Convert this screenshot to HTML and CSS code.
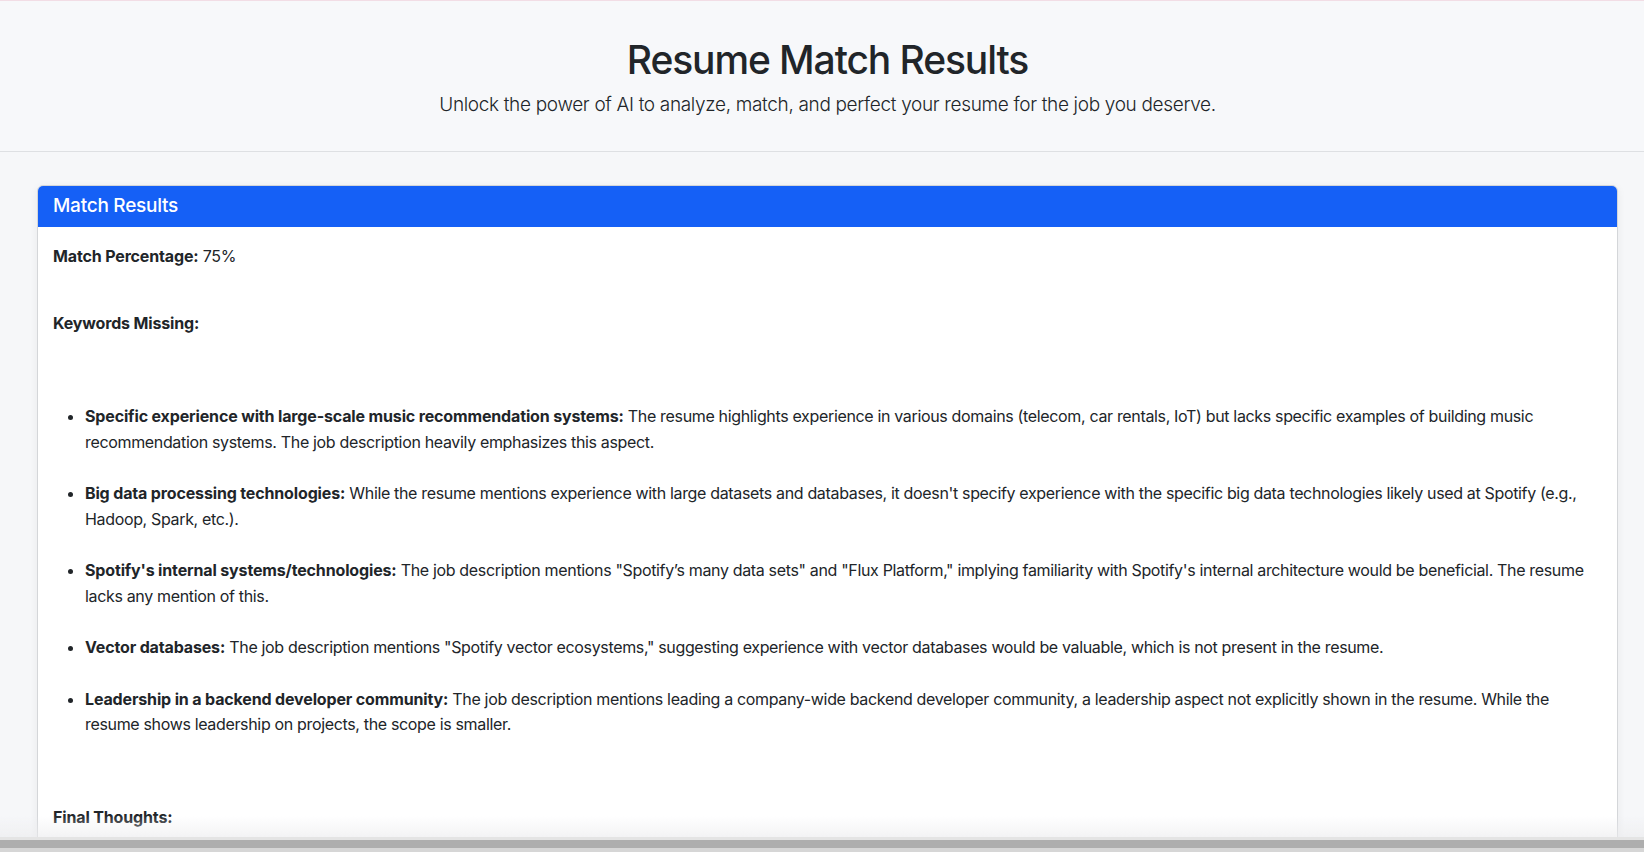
FILE: index.html
```html
<!DOCTYPE html>
<html lang="en">
<head>
<meta charset="utf-8">
<title>Resume Match Results</title>
<link rel="stylesheet" href="styles.css">
</head>
<body>
<header class="hero">
  <div class="hero-inner">
    <h1 class="hero-title">Resume Match Results</h1>
    <p class="hero-lead">Unlock the power of AI to analyze, match, and perfect your resume for the job you deserve.</p>
  </div>
</header>
<main class="page">
  <section class="card">
    <div class="card-header"><h5 class="card-title">Match Results</h5></div>
    <div class="card-body">
      <p class="row-pct"><strong>Match Percentage:</strong> 75%</p>
      <p class="row-kw"><strong>Keywords Missing:</strong></p>
      <ul class="kw-list">
        <li><strong>Specific experience with large-scale music recommendation systems:</strong> The resume highlights experience in various domains (telecom, car rentals, IoT) but lacks specific examples of building music recommendation systems. The job description heavily emphasizes this aspect.</li>
        <li><strong>Big data processing technologies:</strong> While the resume mentions experience with large datasets and databases, it doesn't specify experience with the specific big data technologies likely used at Spotify (e.g., Hadoop, Spark, etc.).</li>
        <li><strong>Spotify's internal systems/technologies:</strong> The job description mentions "Spotify’s many data sets" and "Flux Platform," implying familiarity with Spotify's internal architecture would be beneficial. The resume lacks any mention of this.</li>
        <li><strong>Vector databases:</strong> The job description mentions "Spotify vector ecosystems," suggesting experience with vector databases would be valuable, which is not present in the resume.</li>
        <li><strong>Leadership in a backend developer community:</strong> The job description mentions leading a company-wide backend developer community, a leadership aspect not explicitly shown in the resume. While the resume shows leadership on projects, the scope is smaller.</li>
      </ul>
      <p class="row-final"><strong>Final Thoughts:</strong></p>
    </div>
  </section>
</main>
<div class="bottom-fade"></div>
<div class="bottom-bar"></div>
</body>
</html>
```
FILE: styles.css
```css
html, body {
  margin: 0;
  padding: 0;
}
body {
  background: #f6f7f9;
  color: #212529;
  font-family: Inter, "Noto Sans", "Liberation Sans", sans-serif;
  font-size: 16px;
  line-height: 25.2px;
  letter-spacing: -0.34px;
  border-top: 1px solid #f2dde5;
  overflow: hidden;
  height: 851px;
}
.hero {
  background: #f7f8fa;
  border-bottom: 1px solid #dee0e3;
}
.hero-inner {
  padding: 35px 26px 31px 37px;
  text-align: center;
}
.hero-title {
  margin: 0 0 6px;
  font-size: 39px;
  line-height: 48px;
  font-weight: 500;
  letter-spacing: -1.1px;
}
.hero-lead {
  margin: 0;
  font-size: 19px;
  line-height: 30px;
  font-weight: 300;
  letter-spacing: -0.33px;
}
.page {
  padding: 33px 26px 0 37px;
}
.card {
  background: #fff;
  border: 1px solid #d4d6d9;
  border-radius: 6px;
  box-shadow: 0 2px 8px rgba(0, 0, 0, 0.06);
  overflow: hidden;
  min-height: 700px;
}
.card-header {
  background: #1560f6;
  padding: 8px 15px 9px;
}
.card-title {
  margin: 0;
  color: #fff;
  font-size: 19px;
  line-height: 24px;
  font-weight: 500;
  letter-spacing: -0.25px;
}
.card-body {
  padding: 17px 15px 16px;
}
.card-body p {
  margin: 0;
}
.card-body strong {
  font-weight: 700;
  letter-spacing: -0.15px;
}
.row-pct {
  margin-bottom: 42px !important;
}
.row-kw {
  margin-bottom: 68px !important;
}
.kw-list {
  margin: 0;
  padding-left: 32px;
}
.kw-list li {
  margin-bottom: 26.6px;
}
.kw-list li:last-child {
  margin-bottom: 67px;
}
.bottom-fade {
  position: fixed;
  left: 0;
  right: 0;
  bottom: 15px;
  height: 22px;
  background: linear-gradient(to bottom, rgba(240, 240, 242, 0), rgba(236, 236, 238, 0.6));
  pointer-events: none;
}
.bottom-bar {
  position: fixed;
  left: 0;
  right: 0;
  bottom: 0;
  height: 15px;
  background: linear-gradient(to bottom, #e4e4e4 0, #e4e4e4 3px, #aeaeae 3px, #aeaeae 11px, #d6d6d6 11px);
}
```
